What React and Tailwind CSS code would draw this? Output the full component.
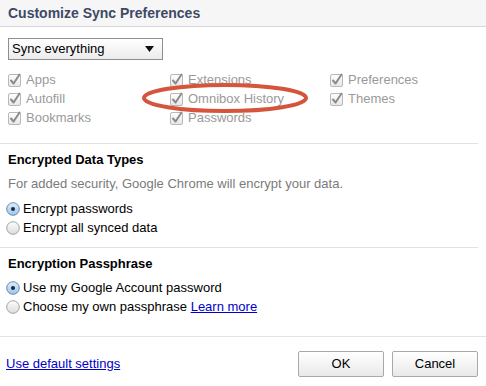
import React from "react";

const font = { fontFamily: '"Liberation Sans", Arial, sans-serif' };

function Check({ label }) {
    return (
        <div className="flex h-[19px] items-center gap-[4px] text-[13px] text-[#9a9a9a]">
            <svg width="14" height="14" viewBox="0 0 14 14" className="shrink-0">
                <defs>
                    <linearGradient id="cbg" x1="0" y1="0" x2="0" y2="1">
                        <stop offset="0" stopColor="#ffffff" />
                        <stop offset="1" stopColor="#e6e6e6" />
                    </linearGradient>
                </defs>
                <rect x="0.5" y="1.5" width="12" height="12" rx="1.5" fill="url(#cbg)" stroke="#b8b8b8" />
                <path d="M3 7.5l2.6 3L11.5 1.5" fill="none" stroke="#8a8a8a" strokeWidth="2" strokeLinecap="round" strokeLinejoin="round" />
            </svg>
            <span>{label}</span>
        </div>
    );
}

function Radio({ checked, children }) {
    return (
        <div className="flex h-[19px] items-center gap-[3px] text-[13px] text-black">
            <svg width="14" height="14" viewBox="0 0 14 14" className="shrink-0">
                <defs>
                    <linearGradient id="rbg" x1="0" y1="0" x2="0" y2="1">
                        <stop offset="0" stopColor="#fdfdfd" />
                        <stop offset="1" stopColor="#dcdcdc" />
                    </linearGradient>
                    <linearGradient id="rbs" x1="0" y1="0" x2="0" y2="1">
                        <stop offset="0" stopColor="#dfeefb" />
                        <stop offset="1" stopColor="#9cc6ee" />
                    </linearGradient>
                </defs>
                <circle cx="7" cy="7" r="6.3" fill={checked ? "url(#rbs)" : "url(#rbg)"} stroke={checked ? "#5c7fa6" : "#9a9a9a"} strokeWidth="0.9" />
                {checked && <circle cx="7" cy="7" r="2" fill="#1b2a3a" />}
            </svg>
            <span>{children}</span>
        </div>
    );
}

export default function App() {
    return (
        <div className="relative h-[386px] w-[486px] overflow-hidden bg-white" style={font}>
            {/* header */}
            <div className="flex h-[27px] items-center border-b border-[#d6d6dc] bg-[#f6f6f6] pl-[8px]">
                <h1 className="text-[14px] font-bold text-[#3d4a66]">Customize Sync Preferences</h1>
            </div>

            <div className="pl-[8px] pr-[8px]">
                {/* select */}
                <div className="mt-[11px] flex h-[22px] w-[155px] items-center justify-between border border-[#8e8e8e] bg-gradient-to-b from-white to-[#ececec] pl-[3px] pr-[8px] text-[13px] text-black">
                    <span>Sync everything</span>
                    <svg width="9" height="6" viewBox="0 0 9 6">
                        <path d="M0 0h9L4.5 6z" fill="#111" />
                    </svg>
                </div>

                {/* checkboxes */}
                <div className="mt-[10px] grid grid-cols-[162px_160px_1fr]">
                    <div>
                        <Check label="Apps" />
                        <Check label="Autofill" />
                        <Check label="Bookmarks" />
                    </div>
                    <div>
                        <Check label="Extensions" />
                        <Check label="Omnibox History" />
                        <Check label="Passwords" />
                    </div>
                    <div>
                        <Check label="Preferences" />
                        <Check label="Themes" />
                    </div>
                </div>
            </div>

            <div className="mr-[8px] mt-[16px] border-t border-[#e2e2e2]" />

            <div className="pl-[8px]">
                <h2 className="mt-[7px] h-[18px] text-[13px] font-bold leading-[18px] text-black">Encrypted Data Types</h2>
                <p className="mt-[6px] h-[18px] text-[13px] leading-[18px] text-[#7b7b7b]">
                    For added security, Google Chrome will encrypt your data.
                </p>
                <div className="-ml-[2px] mt-[6px]">
                    <Radio checked>Encrypt passwords</Radio>
                    <Radio>Encrypt all synced data</Radio>
                </div>
            </div>

            <div className="mr-[8px] mt-[10px] border-t border-[#e2e2e2]" />

            <div className="pl-[8px]">
                <h2 className="mt-[7px] h-[18px] text-[13px] font-bold leading-[18px] text-black">Encryption Passphrase</h2>
                <div className="-ml-[2px] mt-[5px]">
                    <Radio checked>Use my Google Account password</Radio>
                    <Radio>
                        Choose my own passphrase{" "}
                        <a href="#" className="text-[#0000cc] underline">Learn more</a>
                    </Radio>
                </div>
            </div>

            <div className="mt-[20px] border-t border-[#e2e2ea]" />

            {/* footer */}
            <div className="mt-[14px] flex items-center justify-between pl-[6px] pr-[8px]">
                <a href="#" className="text-[13px] text-[#0000cc] underline">Use default settings</a>
                <div className="flex gap-[8px]">
                    <button className="h-[26px] w-[86px] rounded-[2px] border border-[#a9a9a9] bg-gradient-to-b from-white to-[#e9e9e9] text-[13px] text-black">
                        OK
                    </button>
                    <button className="h-[26px] w-[86px] rounded-[2px] border border-[#a9a9a9] bg-gradient-to-b from-white to-[#e9e9e9] text-[13px] text-black">
                        Cancel
                    </button>
                </div>
            </div>

            {/* annotation ellipse */}
            <svg className="pointer-events-none absolute left-0 top-0" width="486" height="386">
                <ellipse cx="225" cy="98" rx="81" ry="13" fill="none" stroke="#d5543c" strokeWidth="4" />
            </svg>
        </div>
    );
}
